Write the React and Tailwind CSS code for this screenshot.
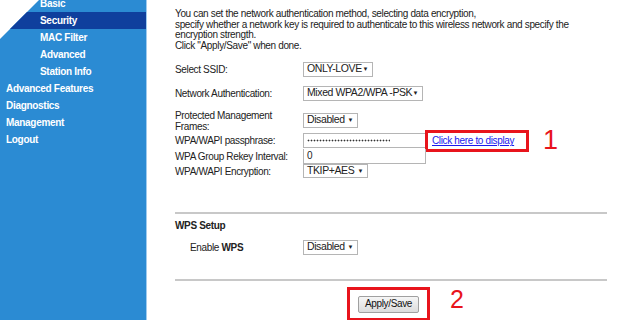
import React from "react";

const font = { fontFamily: '"Liberation Sans", Arial, sans-serif' };

function Select({ children, className = "" }) {
  return (
    <div
      className={`flex items-center justify-between whitespace-nowrap border border-[#b5b5b5] bg-white pl-[3px] pr-[4px] text-[10.5px] tracking-[-0.4px] text-[#222] ${className}`}
    >
      <span>{children}</span>
      <span className="text-[6px]">▼</span>
    </div>
  );
}

export default function App() {
  const sub = ["Basic", "Security", "MAC Filter", "Advanced", "Station Info"];
  const top = ["Advanced Features", "Diagnostics", "Management", "Logout"];
  return (
    <div className="flex h-[320px] w-[630px] overflow-hidden bg-white" style={font}>
      <div
        className="flex w-[146px] shrink-0 flex-col bg-[#2b8bd3] text-[10px] font-bold tracking-[-0.3px] text-white"
        style={{ clipPath: "polygon(39px 0, 100% 0, 100% 100%, 0 100%, 0 39px)" }}
      >
        <div className="mt-[-5px]" />
        {sub.map((s) => (
          <div
            key={s}
            className={`flex h-[17px] items-center pl-[40px] ${s === "Security" ? "bg-[#0f3f9d]" : ""}`}
          >
            {s}
          </div>
        ))}
        {top.map((s) => (
          <div key={s} className="flex h-[17px] items-center pl-[6px]">
            {s}
          </div>
        ))}
      </div>
      <div className="w-px shrink-0 bg-[#9fcbef]" />
      <div className="flex-1 pl-[28px] text-[10px] tracking-[-0.35px] text-[#222]">
        <div className="pt-[9px] leading-[10.7px] whitespace-nowrap">
          You can set the network authentication method, selecting data encryption,
          <br />
          specify whether a network key is required to authenticate to this wireless network and specify the
          <br />
          encryption strength.
          <br />
          Click "Apply/Save" when done.
        </div>

        <div className="mt-[10px] flex flex-col">
          <div className="flex h-[15px] items-center">
            <div className="w-[128px]">Select SSID:</div>
            <Select className="h-[15px] w-[70px]">ONLY-LOVE</Select>
          </div>
          <div className="mt-[9px] flex h-[15px] items-center">
            <div className="w-[128px]">Network Authentication:</div>
            <Select className="h-[15px] w-[120px]">Mixed WPA2/WPA -PSK</Select>
          </div>
          <div className="mt-[9px] flex h-[23px] items-center">
            <div className="w-[128px] leading-[11px]">
              Protected Management
              <br />
              Frames:
            </div>
            <Select className="mt-[-2px] h-[15px] w-[55px]">Disabled</Select>
          </div>
          <div className="flex h-[16px] items-center">
            <div className="w-[128px]">WPA/WAPI passphrase:</div>
            <div className="flex h-[15px] w-[123px] items-center border border-[#b5b5b5] pl-[3px]">
              <div className="h-[3px] w-[83px] bg-[radial-gradient(circle,#333_0.8px,transparent_1.1px)] bg-[length:3px_3px]" />
            </div>
            <div className="ml-[-1px] flex h-[22px] w-[104px] items-center border-[3px] border-[#e8141c] pl-[4px]">
              <a className="text-[10px] text-[#1a1aee] underline">Click here to display</a>
            </div>
            <div className="ml-[14px] text-[27px] leading-none text-[#e8141c]">1</div>
          </div>
          <div className="flex h-[15px] items-center">
            <div className="w-[128px]">WPA Group Rekey Interval:</div>
            <div className="flex h-[15px] w-[123px] items-center border border-t-0 border-[#b5b5b5] pl-[3px]">
              0
            </div>
          </div>
          <div className="flex h-[15px] items-center">
            <div className="w-[128px]">WPA/WAPI Encryption:</div>
            <Select className="h-[14px] w-[65px]">TKIP+AES</Select>
          </div>
        </div>

        <div className="mt-[33px] mr-[23px] h-[2px] bg-[#c8c8c8]" />
        <div className="mt-[4px] font-bold">WPS Setup</div>
        <div className="mt-[7px] flex h-[15px] items-center">
          <div className="w-[128px] pl-[15px]">
            Enable <b>WPS</b>
          </div>
          <Select className="h-[15px] w-[55px]">Disabled</Select>
        </div>
        <div className="mt-[24px] mr-[23px] h-[2px] bg-[#c8c8c8]" />
        <div className="mt-[6px] flex items-start">
          <div className="ml-[172px] flex h-[34px] w-[83px] justify-center border-[3px] border-[#e8141c] pt-[6px]">
            <button className="h-[17px] rounded-[2px] border border-[#a0a0a0] bg-gradient-to-b from-[#f6f6f6] to-[#dcdcdc] px-[6px] text-[10px] leading-none text-[#111]">
              Apply/Save
            </button>
          </div>
          <div className="ml-[20px] mt-[0px] text-[25px] leading-none text-[#e8141c]">2</div>
        </div>
      </div>
    </div>
  );
}
